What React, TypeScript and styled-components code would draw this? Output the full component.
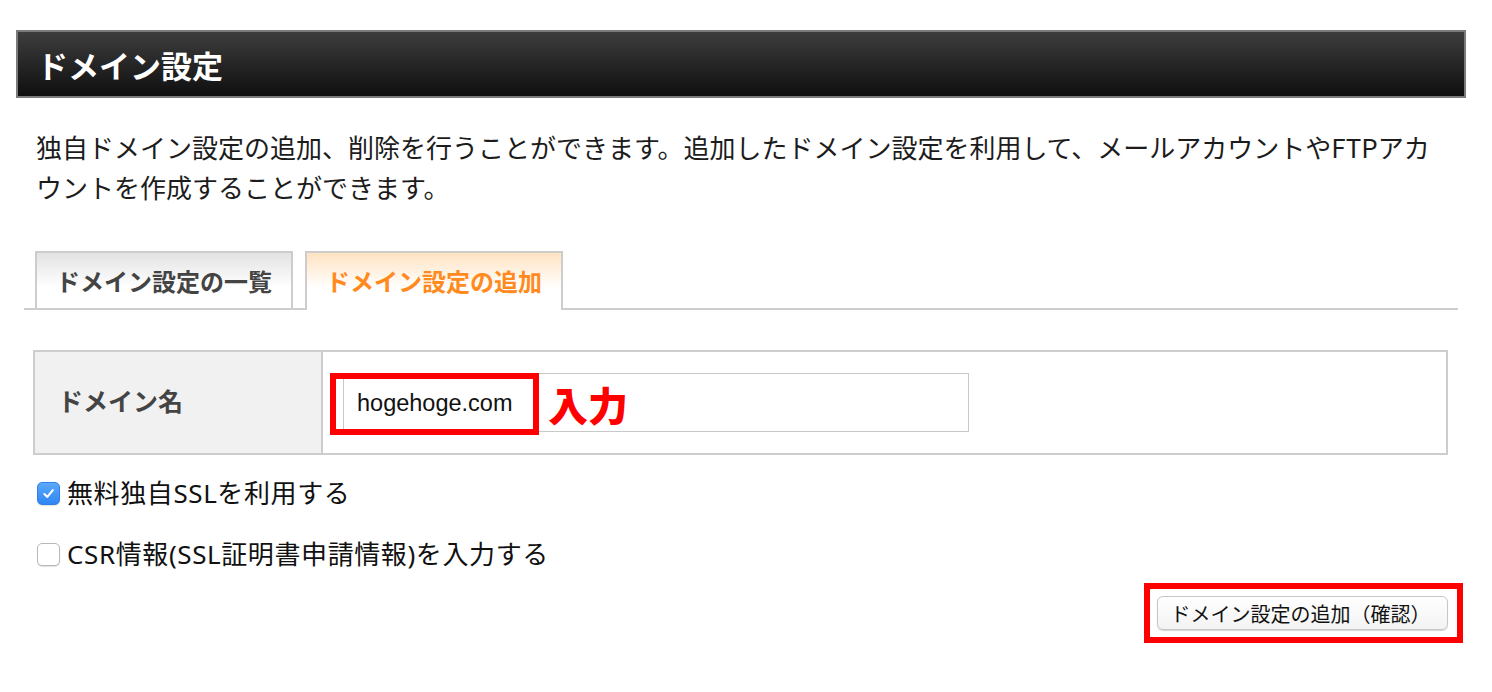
import React, { useState } from 'react'
import styled, { createGlobalStyle } from 'styled-components'

const GlobalStyle = createGlobalStyle`
  body {
    margin: 0;
    background: #fff;
    font-family: "Noto Sans CJK JP", "Noto Sans", sans-serif;
    color: #222;
  }
`

const Page = styled.div`
  width: 1450px;
  padding: 30px 0 0 16px;
`

const Header = styled.div`
  box-sizing: border-box;
  height: 68px;
  border: 2px solid #7b7b7b;
  background: linear-gradient(#3d3d3d, #0f0f0f);
  display: flex;
  align-items: center;
  padding-left: 19px;
`

const HeaderTitle = styled.h1`
  margin: 0;
  font-size: 31px;
  font-weight: 700;
  color: #fff;
`

const Description = styled.p`
  margin: 29px 20px 0 20px;
  font-size: 26px;
  line-height: 40px;
  color: #1c1c1c;
`

const TabBar = styled.div`
  margin: 44px 8px 0 8px;
  padding-left: 11px;
  display: flex;
  align-items: flex-end;
  gap: 12px;
  border-bottom: 2px solid #cdcdcd;
`

const Tab = styled.div<{ active?: boolean }>`
  box-sizing: border-box;
  width: 258px;
  height: ${({ active }) => (active ? 59 : 57)}px;
  margin-bottom: ${({ active }) => (active ? -2 : 0)}px;
  padding-bottom: ${({ active }) => (active ? 2 : 0)}px;
  border: 2px solid #cdcdcd;
  border-bottom: none;
  background: ${({ active }) =>
    active ? 'linear-gradient(#ffe3c2 0%, #fff 62%)' : 'linear-gradient(#e2e2e2 0%, #fff 62%)'};
  display: flex;
  align-items: center;
  justify-content: center;
  font-size: 24px;
  font-weight: 700;
  color: ${({ active }) => (active ? '#ff8a1e' : '#444')};
  cursor: pointer;
`

const FormTable = styled.div`
  box-sizing: border-box;
  margin: 40px 0 0 17px;
  width: 1415px;
  height: 105px;
  border: 2px solid #cdcdcd;
  display: grid;
  grid-template-columns: 288px 1fr;
`

const LabelCell = styled.div`
  background: #f1f1f1;
  border-right: 2px solid #cdcdcd;
  display: flex;
  align-items: center;
  padding: 0 0 6px 23px;
  font-size: 25px;
  font-weight: 700;
  color: #444;
`

const ValueCell = styled.div`
  display: flex;
  align-items: center;
  padding-left: 20px;
`

const InputWrap = styled.div`
  position: relative;
`

const TextInput = styled.input`
  box-sizing: border-box;
  width: 626px;
  height: 59px;
  border: 1px solid #c8c8c8;
  padding: 2px 0 0 13px;
  font-family: "Liberation Sans", Arial, sans-serif;
  font-size: 23.5px;
  color: #111;
  outline: none;
`

const RedFrame = styled.div`
  position: absolute;
  left: -13px;
  top: 0;
  width: 209px;
  height: 62px;
  box-sizing: border-box;
  border: 6px solid #ff0000;
  pointer-events: none;
`

const RedNote = styled.span`
  position: absolute;
  left: 205px;
  top: 6px;
  font-size: 40px;
  font-weight: 900;
  line-height: 50px;
  color: #ff0000;
  pointer-events: none;
`

const CheckList = styled.div`
  margin: 17px 0 0 21px;
  display: flex;
  flex-direction: column;
  gap: 21px;
`

const CheckRow = styled.label`
  display: flex;
  align-items: center;
  gap: 7px;
  height: 40px;
  font-family: "Noto Sans", "Noto Sans CJK JP", sans-serif;
  font-size: 26px;
  letter-spacing: 0.6px;
  color: #111;
  cursor: pointer;
`

const Box = styled.span<{ checked: boolean }>`
  box-sizing: border-box;
  width: 23px;
  height: 23px;
  margin-top: 2px;
  border-radius: 5px;
  display: flex;
  align-items: center;
  justify-content: center;
  border: 1px solid ${({ checked }) => (checked ? '#2f7fe6' : '#b8b8b8')};
  background: ${({ checked }) => (checked ? 'linear-gradient(#5aa9ff, #2f86f2)' : '#fff')};
  box-shadow: 0 1px 1px rgba(0, 0, 0, 0.12);
`

const ActionRow = styled.div`
  margin-top: 10px;
  padding-right: 3px;
  display: flex;
  justify-content: flex-end;
`

const ActionFrame = styled.div`
  border: 6px solid #ff0000;
  padding: 7px 9px 7px 7px;
  display: flex;
`

const ConfirmButton = styled.button`
  width: 291px;
  height: 34px;
  border: 1px solid #c6c6c6;
  border-radius: 6px;
  background: linear-gradient(#ffffff, #f3f3f3);
  box-shadow: 0 1px 1px rgba(0, 0, 0, 0.18);
  font-family: "Noto Sans CJK JP", sans-serif;
  font-size: 20px;
  color: #111;
  padding: 0 4px 0 0;
  cursor: pointer;
`

const CheckMark = () => (
  <svg width="15" height="15" viewBox="0 0 16 16">
    <path d="M3.5 8.5 L6.8 11.6 L12.6 4.4" fill="none" stroke="#fff" strokeWidth="2.2" strokeLinecap="round" strokeLinejoin="round" />
  </svg>
)

export default function App() {
  const [tab, setTab] = useState(1)
  const [domain, setDomain] = useState('hogehoge.com')
  const [useSsl, setUseSsl] = useState(true)
  const [useCsr, setUseCsr] = useState(false)

  return (
    <>
      <GlobalStyle />
      <Page>
        <Header>
          <HeaderTitle>ドメイン設定</HeaderTitle>
        </Header>
        <Description>
          独自ドメイン設定の追加、削除を行うことができます。追加したドメイン設定を利用して、メールアカウントやFTPアカウントを作成することができます。
        </Description>
        <TabBar>
          <Tab active={tab === 0} onClick={() => setTab(0)}>ドメイン設定の一覧</Tab>
          <Tab active={tab === 1} onClick={() => setTab(1)}>ドメイン設定の追加</Tab>
        </TabBar>
        <FormTable>
          <LabelCell>ドメイン名</LabelCell>
          <ValueCell>
            <InputWrap>
              <TextInput value={domain} onChange={(e) => setDomain(e.target.value)} />
              <RedFrame />
              <RedNote>入力</RedNote>
            </InputWrap>
          </ValueCell>
        </FormTable>
        <CheckList>
          <CheckRow onClick={() => setUseSsl(!useSsl)}>
            <Box checked={useSsl}>{useSsl && <CheckMark />}</Box>
            無料独自SSLを利用する
          </CheckRow>
          <CheckRow onClick={() => setUseCsr(!useCsr)}>
            <Box checked={useCsr}>{useCsr && <CheckMark />}</Box>
            CSR情報(SSL証明書申請情報)を入力する
          </CheckRow>
        </CheckList>
        <ActionRow>
          <ActionFrame>
            <ConfirmButton>ドメイン設定の追加（確認）</ConfirmButton>
          </ActionFrame>
        </ActionRow>
      </Page>
    </>
  )
}
